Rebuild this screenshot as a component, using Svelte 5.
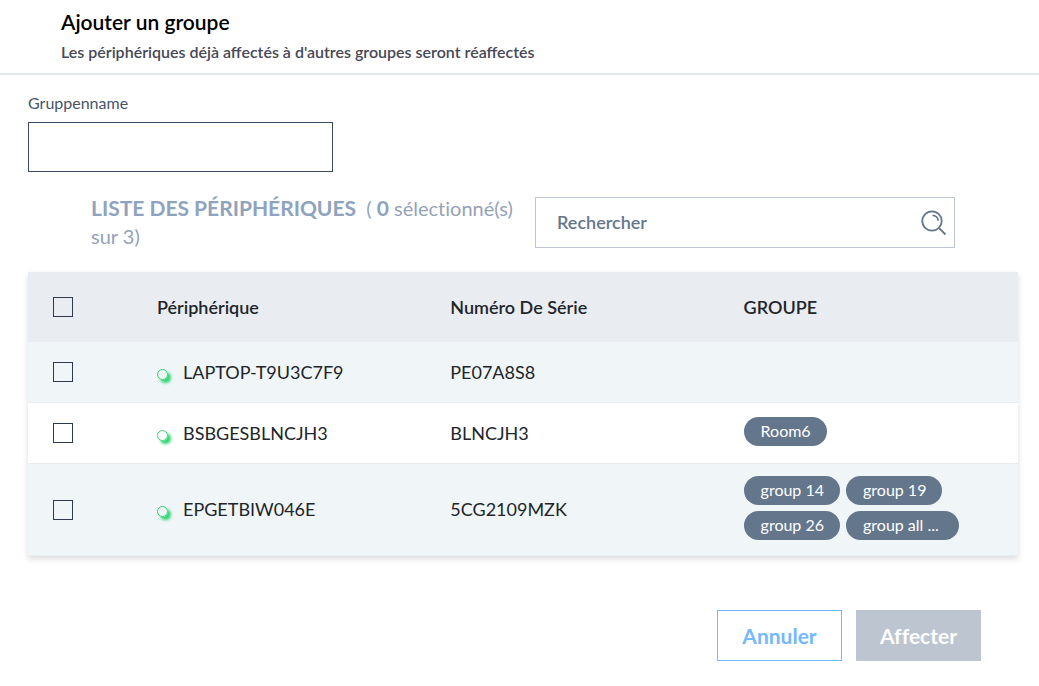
<script>
  let groupName = '';
  let search = '';
  let selected = [];

  const devices = [
    { name: 'LAPTOP-T9U3C7F9', serial: 'PE07A8S8', groups: [] },
    { name: 'BSBGESBLNCJH3', serial: 'BLNCJH3', groups: ['Room6'] },
    { name: 'EPGETBIW046E', serial: '5CG2109MZK', groups: ['group 14', 'group 19', 'group 26', 'group all devices'] }
  ];

  $: filtered = devices.filter((d) =>
    (d.name + ' ' + d.serial).toLowerCase().includes(search.toLowerCase())
  );
  $: allSelected = selected.length === devices.length;

  function toggleAll() {
    selected = allSelected ? [] : devices.map((d) => d.serial);
  }

  function shorten(text) {
    return text.length > 10 ? text.slice(0, 10) + '...\u00a0' : text;
  }

  function cancel() {
    groupName = '';
    search = '';
    selected = [];
  }
</script>

<div class="dialog">
  <header>
    <h1>Ajouter un groupe</h1>
    <p>Les périphériques déjà affectés à d'autres groupes seront réaffectés</p>
  </header>

  <main>
    <div class="field">
      <label for="group-name">Gruppenname</label>
      <input id="group-name" type="text" bind:value={groupName} />
    </div>

    <div class="toolbar">
      <h2>
        <strong>LISTE DES PÉRIPHÉRIQUES</strong>&nbsp; (&nbsp;<strong>{selected.length}</strong> <span>sélectionné(s)</span> <span>sur {devices.length})</span>
      </h2>
      <div class="search">
        <input type="text" placeholder="Rechercher" aria-label="Rechercher" bind:value={search} />
        <button class="search-btn" aria-label="Lancer la recherche">
          <svg viewBox="0 0 26 26" width="26" height="26" fill="none" stroke="#64768c">
            <circle cx="11" cy="11" r="9.7" stroke-width="1.8" />
            <path d="M11.5 5.3c3.1 0 5.5 2.4 5.7 5.4" stroke-width="1.7" />
            <path d="M17.9 17.9l6.6 6.6" stroke-width="1.8" />
          </svg>
        </button>
      </div>
    </div>

    <table>
      <thead>
        <tr>
          <th class="check">
            <input type="checkbox" aria-label="Tout sélectionner" checked={allSelected} on:change={toggleAll} />
          </th>
          <th class="name">Périphérique</th>
          <th class="serial">Numéro De Série</th>
          <th>GROUPE</th>
        </tr>
      </thead>
      <tbody>
        {#each filtered as device (device.serial)}
          <tr>
            <td>
              <input type="checkbox" aria-label={device.name} value={device.serial} bind:group={selected} />
            </td>
            <td>
              <div class="device"><span class="status"></span>{device.name}</div>
            </td>
            <td>{device.serial}</td>
            <td class="groups">
              <div class="badges">
                {#each device.groups as group}
                  <span class="badge" title={group}>{shorten(group)}</span>
                {/each}
              </div>
            </td>
          </tr>
        {/each}
      </tbody>
    </table>

    <footer>
      <button class="btn cancel" on:click={cancel}>Annuler</button>
      <button class="btn assign" disabled={!groupName || !selected.length}>Affecter</button>
    </footer>
  </main>
</div>

<style>
  :global(body) {
    margin: 0;
    background: #fff;
  }
  .dialog, .dialog input, .dialog button {
    font-family: Lato, "Liberation Sans", sans-serif;
    font-variant-ligatures: none;
    box-sizing: border-box;
  }
  header {
    padding: 7px 61px 9px;
    border-bottom: 2px solid #e4e6ee;
  }
  h1 {
    margin: 0;
    font-size: 21px;
    line-height: 30px;
    font-weight: 600;
    color: #000;
  }
  header p {
    margin: 0;
    padding-top: 3px;
    font-size: 16px;
    line-height: 24px;
    font-weight: 600;
    font-variant-ligatures: normal;
    color: #464855;
  }
  main {
    padding: 16px 21px 25px 28px;
  }
  .field {
    display: flex;
    flex-direction: column;
    align-items: flex-start;
  }
  .field label {
    font-size: 16px;
    line-height: 24px;
    padding-bottom: 7px;
    color: #475569;
  }
  .field input {
    width: 305px;
    height: 50px;
    padding: 0 16px;
    border: 1px solid #3b4861;
    font-size: 18px;
    outline: none;
  }
  .toolbar {
    display: flex;
    justify-content: space-between;
    align-items: flex-start;
    padding: 22px 63px 22px;
    gap: 12px;
  }
  h2 {
    flex: 1;
    margin: 0;
    font-size: 20px;
    line-height: 28px;
    font-weight: 400;
    color: #94a3b8;
  }
  h2 strong {
    font-size: 21px;
    font-weight: 700;
    color: #8fa3bd;
  }
  .search {
    display: flex;
    align-items: center;
    width: 420px;
    height: 51px;
    margin-top: 3px;
    box-sizing: border-box;
    border: 1px solid #bcc5d1;
  }
  .search input {
    flex: 1;
    min-width: 0;
    height: 100%;
    padding: 0 21px 2px;
    border: 0;
    outline: none;
    background: none;
    font-size: 18px;
    font-weight: 600;
    color: #64768c;
  }
  .search input::placeholder {
    color: #64768c;
    opacity: 1;
  }
  .search-btn {
    display: flex;
    padding: 0 7px;
    border: 0;
    background: none;
    cursor: pointer;
  }
  table {
    width: 100%;
    table-layout: fixed;
    border-collapse: collapse;
    box-shadow: 0 3px 6px rgba(0, 0, 0, 0.14);
    color: #212529;
  }
  th, td {
    padding: 0 0 0 25px;
    text-align: left;
    vertical-align: middle;
    font-size: 18px;
    line-height: 27px;
  }
  th {
    height: 70px;
    background: #e9edf2;
    font-weight: 600;
  }
  .check {
    width: 79px;
  }
  .name, .serial {
    width: 27.1%;
  }
  td {
    height: 60px;
    border-bottom: 1px solid #e9edf2;
    font-weight: 400;
  }
  tbody tr:nth-child(odd) {
    background: #f0f5f8;
  }
  input[type="checkbox"] {
    appearance: none;
    display: block;
    width: 20px;
    height: 20px;
    margin: 0;
    border: 1px solid #2f3a4c;
    cursor: pointer;
  }
  input[type="checkbox"]:checked {
    background: #64768c;
  }
  .device {
    display: flex;
    align-items: center;
    gap: 15px;
  }
  .status {
    width: 11px;
    height: 11px;
    margin-top: 4px;
    box-sizing: border-box;
    border: 1px solid #2ed573;
    border-radius: 50%;
    box-shadow: 3px 3px 3px #2ed573;
  }
  .groups {
    padding: 12px 12px 15px 25px;
    height: 33px;
  }
  .badges {
    display: flex;
    flex-wrap: wrap;
    gap: 6px;
    max-width: 240px;
  }
  .badge {
    padding: 0 16px 1px 17px;
    border-radius: 15px;
    background: #64768c;
    color: #fff;
    font-size: 16px;
    line-height: 28px;
  }
  footer {
    display: flex;
    justify-content: flex-end;
    gap: 14px;
    padding: 54px 37px 0 0;
  }
  .btn {
    min-width: 125px;
    height: 51px;
    padding: 0 22px;
    border: 1px solid #74b8ff;
    font-size: 21px;
    font-weight: 700;
    cursor: pointer;
  }
  .cancel {
    background: #fff;
    color: #74b8ff;
  }
  .assign {
    background: #74b8ff;
    color: #fff;
  }
  .assign:disabled {
    border-color: #bdc5d1;
    background: #bdc5d1;
    cursor: default;
  }
</style>
